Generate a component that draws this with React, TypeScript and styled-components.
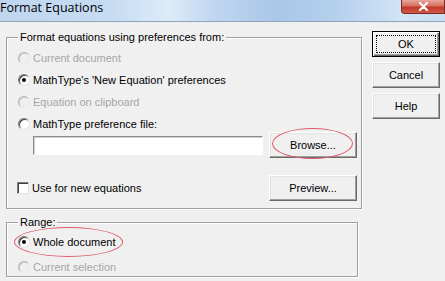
import * as React from 'react'
import styled, { createGlobalStyle } from 'styled-components'

const Global = createGlobalStyle`
  html, body {
    margin: 0;
    padding: 0;
    background: #f0f0f0;
  }
  body {
    font-family: "Liberation Sans", Arial, sans-serif;
    font-size: 11px;
    color: #000;
  }
`

const Window = styled.div`
  width: 445px;
  height: 281px;
  overflow: hidden;
  background: #f0f0f0;
`

const TitleBar = styled.div`
  height: 21px;
  display: flex;
  align-items: flex-start;
  justify-content: space-between;
  border-bottom: 1px solid #8ea4bc;
  background: linear-gradient(90deg, #bfd6ef 0%, #c6dcf2 25%, #dcebf9 38%, #c0d7f0 48%, #a9c7e7 62%, #b4cfec 75%, #d2e4f6 90%, #c9def3 100%);
`

const Title = styled.span`
  font-family: "Open Sans", "Noto Sans", sans-serif;
  font-size: 12.5px;
  line-height: 16px;
  color: #000;
`

const CloseBox = styled.div`
  width: 42px;
  height: 13px;
  display: flex;
  align-items: center;
  justify-content: center;
  border: 1px solid #7a2a22;
  border-top: none;
  border-radius: 0 0 0 4px;
  background: linear-gradient(180deg, #e9a79b 0%, #d66e5f 45%, #c2382a 55%, #d15a45 100%);
`

const Body = styled.div`
  display: flex;
  align-items: flex-start;
  padding: 9px 0 0 6px;
  gap: 10px;
`

const LeftCol = styled.div`
  display: flex;
  flex-direction: column;
`

/* group box drawn as a plain bordered div with a caption sitting on its top edge */
const Group = styled.div<{ $w: number }>`
  position: relative;
  width: ${p => p.$w}px;
  box-sizing: border-box;
  margin-top: 6px;
  padding: 7px 4px 0 11px;
  border: 1px solid #a0a0a0;
  box-shadow: inset 1px 1px 0 #fff, 1px 1px 0 #fff;
`

const Caption = styled.span`
  position: absolute;
  left: 11px;
  top: -7px;
  padding: 0 2px;
  line-height: 13px;
  background: #f0f0f0;
  white-space: nowrap;
`

const Row = styled.label<{ $h?: number }>`
  display: flex;
  align-items: center;
  gap: 3px;
  height: ${p => p.$h ?? 22}px;
  position: relative;
`

const Radio = styled.span<{ $on?: boolean; $off?: boolean }>`
  width: 12px;
  height: 12px;
  box-sizing: border-box;
  border-radius: 50%;
  border: 1px solid;
  border-color: ${p => (p.$off ? '#b4b4b4 #e8e8e8 #e8e8e8 #b4b4b4' : '#7c7c7c #e2e2e2 #e2e2e2 #7c7c7c')};
  background: ${p => (p.$off ? '#f0f0f0' : '#fff')};
  box-shadow: inset 1px 1px 0 ${p => (p.$off ? '#d0d0d0' : '#404040')};
  display: flex;
  align-items: center;
  justify-content: center;
  flex: none;
  &::after {
    content: '';
    display: ${p => (p.$on ? 'block' : 'none')};
    width: 4px;
    height: 4px;
    border-radius: 50%;
    background: #000;
  }
`

const Check = styled.span`
  width: 12px;
  height: 12px;
  box-sizing: border-box;
  border: 1px solid;
  border-color: #7c7c7c #e2e2e2 #e2e2e2 #7c7c7c;
  box-shadow: inset 1px 1px 0 #404040;
  background: #fff;
  flex: none;
  margin-left: -1px;
`

const Label = styled.span<{ $off?: boolean }>`
  color: ${p => (p.$off ? '#a6a6a6' : '#000')};
  white-space: nowrap;
`

const FileRow = styled.div`
  display: flex;
  align-items: center;
  height: 26px;
  margin: -3px 0 0 15px;
  gap: 6px;
`

const TextField = styled.div`
  width: 230px;
  height: 19px;
  box-sizing: border-box;
  background: #fff;
  border: 1px solid;
  border-color: #8c8c8c #fff #fff #8c8c8c;
  box-shadow: inset 1px 1px 0 #d0d0d0;
`

const Button = styled.button<{ $w?: number; $h?: number }>`
  position: relative;
  width: ${p => p.$w ?? 88}px;
  height: ${p => p.$h ?? 26}px;
  box-sizing: border-box;
  padding: 0;
  font: inherit;
  color: #000;
  background: #f0f0f0;
  border: 1px solid;
  border-color: #fff #6a6a6a #6a6a6a #fff;
  box-shadow: inset -1px -1px 0 #a0a0a0, inset 1px 1px 0 #e3e3e3;
  flex: none;
`

const DefaultButton = styled(Button)`
  border: 1px solid #000;
  box-shadow: inset 1px 1px 0 #fff, inset -1px -1px 0 #6a6a6a, inset -2px -2px 0 #a0a0a0;
  &::before {
    content: '';
    position: absolute;
    inset: 3px;
    border: 1px dotted #000;
  }
`

const CheckRow = styled.div`
  display: flex;
  align-items: center;
  justify-content: space-between;
  height: 25px;
  margin-top: 17px;
  padding-bottom: 8px;
`

const RangeRows = styled.div`
  display: flex;
  flex-direction: column;
  gap: 5px;
  padding-top: 2px;
`

const RightCol = styled.div`
  display: flex;
  flex-direction: column;
  gap: 5px;
`

const GroupGap = styled.div`
  height: 7px;
`

const Ring = styled.span<{ $l: number; $t: number; $w: number; $h: number }>`
  position: absolute;
  left: ${p => p.$l}px;
  top: ${p => p.$t}px;
  width: ${p => p.$w}px;
  height: ${p => p.$h}px;
  border: 1px solid #de5b6b;
  border-radius: 50%;
  pointer-events: none;
`

export default function App() {
  return (
    <Window>
      <Global />
      <TitleBar>
        <Title>Format Equations</Title>
        <CloseBox>
          <svg width="11" height="9" viewBox="0 0 11 9">
            <path d="M2 1 L9 8 M9 1 L2 8" stroke="#fff" strokeWidth="2.2" strokeLinecap="round" />
          </svg>
        </CloseBox>
      </TitleBar>
      <Body>
        <LeftCol>
          <Group $w={356}>
            <Caption>Format equations using preferences from:</Caption>
            <Row style={{ marginTop: 2 }}>
              <Radio $off />
              <Label $off>Current document</Label>
            </Row>
            <Row>
              <Radio $on />
              <Label>MathType's 'New Equation' preferences</Label>
            </Row>
            <Row>
              <Radio $off />
              <Label $off>Equation on clipboard</Label>
            </Row>
            <Row>
              <Radio />
              <Label>MathType preference file:</Label>
            </Row>
            <FileRow>
              <TextField />
              <Button>
                Browse...
                <Ring $l={2} $t={-5} $w={79} $h={29} />
              </Button>
            </FileRow>
            <CheckRow>
              <Row $h={14}>
                <Check />
                <Label>Use for new equations</Label>
              </Row>
              <Button>Preview...</Button>
            </CheckRow>
          </Group>
          <GroupGap />
          <Group $w={352}>
            <Caption>Range:</Caption>
            <RangeRows>
              <Row $h={20}>
                <Radio $on />
                <Label>Whole document</Label>
                <Ring $l={-4} $t={-5} $w={107} $h={28} />
              </Row>
              <Row $h={19}>
                <Radio $off />
                <Label $off>Current selection</Label>
              </Row>
            </RangeRows>
          </Group>
        </LeftCol>
        <RightCol>
          <DefaultButton $w={68}>OK</DefaultButton>
          <Button $w={68}>Cancel</Button>
          <Button $w={68}>Help</Button>
        </RightCol>
      </Body>
    </Window>
  )
}
